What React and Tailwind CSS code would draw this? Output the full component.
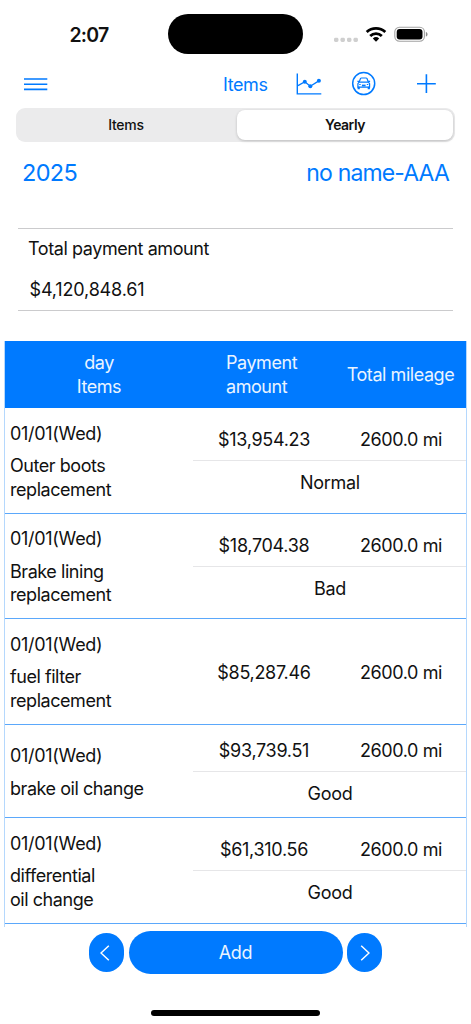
import React from "react";

const rows = [
    { date: "01/01(Wed)", item: ["Outer boots", "replacement"], amount: "$13,954.23", mileage: "2600.0 mi", status: "Normal", height: "h-[106px]" },
    { date: "01/01(Wed)", item: ["Brake lining", "replacement"], amount: "$18,704.38", mileage: "2600.0 mi", status: "Bad", height: "h-[105px]" },
    { date: "01/01(Wed)", item: ["fuel filter", "replacement"], amount: "$85,287.46", mileage: "2600.0 mi", height: "h-[106px]" },
    { date: "01/01(Wed)", item: ["brake oil change"], amount: "$93,739.51", mileage: "2600.0 mi", status: "Good", height: "h-[93px]" },
    { date: "01/01(Wed)", item: ["differential", "oil change"], amount: "$61,310.56", mileage: "2600.0 mi", status: "Good", height: "h-[106px]" },
];

function StatusBar() {
    return (
        <div className="flex h-[68px] items-start">
            <div className="w-[168px] pt-[23px] pl-[69.5px] text-[19.5px] leading-6 font-semibold tracking-[-0.8px]">2:07</div>
            <div className="mt-[14px] h-10 w-[135px] rounded-full bg-black" />
            {/* Signal, wifi and battery */}
            <svg className="mt-[22px] ml-[30px]" width="96" height="24" viewBox="0 0 96 24">
                <g fill="#cfcfcf">
                    <rect x="1" y="15.8" width="4.4" height="4.2" rx="1.4" />
                    <rect x="7.5" y="15.8" width="4.4" height="4.2" rx="1.4" />
                    <rect x="14" y="15.8" width="4.4" height="4.2" rx="1.4" />
                    <rect x="20.5" y="15.8" width="4.4" height="4.2" rx="1.4" />
                </g>
                <g fill="none" stroke="#000" strokeWidth="2.8">
                    <path d="M33.7 10.1a13.6 13.6 0 0 1 18.6 0" />
                    <path d="M37.2 14a8.4 8.4 0 0 1 11.6 0" />
                </g>
                <path d="M39.8 16.5a4.8 4.8 0 0 1 6.4 0L43 19.8z" />
                <rect x="61.8" y="5.2" width="29.6" height="14" rx="4.6" fill="none" stroke="#a3a3a3" strokeWidth="1.1" />
                <rect x="63.7" y="7" width="25.8" height="10.4" rx="3" />
                <path d="M92.9 10v4.6c2.2-.7 2.2-3.9 0-4.6z" fill="#8c8c8c" />
            </svg>
        </div>
    );
}

function NavBar() {
    return (
        <div className="flex h-[39.5px] items-start text-[#007aff]">
            <svg className="mt-[9px] ml-6" width="24" height="14" viewBox="0 0 24 14" stroke="currentColor" strokeWidth="1.6">
                <path d="M0 2h23.3M0 7.2h23.3M0 12.4h23.3" />
            </svg>
            <div className="mt-[5px] ml-[175px] w-[47px] text-[18px] leading-6 whitespace-nowrap tracking-[-0.4px]">Items</div>
            <svg className="mt-[4px] ml-[26px]" width="26" height="24" viewBox="0 0 26 24" fill="none" stroke="currentColor" strokeWidth="1.4">
                <path d="M1.3 1.5v20.4h24" />
                <path d="M2 13.6l6.8-3.8 5.5 4.4 8.9-5.6" strokeWidth="1.3" />
                <g fill="currentColor" stroke="none">
                    <circle cx="8.8" cy="9.8" r="2" />
                    <circle cx="14.3" cy="14.2" r="2" />
                    <circle cx="22.9" cy="8.8" r="2" />
                </g>
            </svg>
            <svg className="mt-[3px] ml-[29px]" width="26" height="26" viewBox="0 0 26 26" fill="none" stroke="currentColor">
                <circle cx="12.7" cy="12.6" r="11" strokeWidth="1.5" />
                <path d="M8.2 11l1.3-3.4q.3-.6 1-.6h4.5q.7 0 1 .6l1.3 3.4" strokeWidth="1.2" />
                <path d="M8.1 11.1h9.3l1.2 1.5v3.5H6.9v-3.5z" strokeWidth="1.2" />
                <path d="M7.7 15.7v2.5M17.8 15.7v2.5" strokeWidth="2.2" />
                <path d="M6.4 10.3h1.9M17.2 10.3h1.9" strokeWidth="1.2" />
                <path d="M10.9 14.5h3.7" strokeWidth="1.8" />
                <path d="M8.2 13.5h1.5M15.8 13.5h1.5" strokeWidth="1.2" />
            </svg>
            <svg className="mt-[6px] ml-10" width="20" height="20" viewBox="0 0 20 20" stroke="currentColor" strokeWidth="1.6">
                <path d="M0 9.7h18.8M9.4.3v18.8" />
            </svg>
        </div>
    );
}

function SegmentedControl() {
    return (
        <div className="mr-4 ml-4 flex h-[34px] rounded-[9px] bg-[#ebebec] p-[2px] text-center text-[14px] leading-[30px] tracking-[-0.3px]">
            <div className="w-[219px] pr-[3px] font-medium">Items</div>
            <div className="flex-1 rounded-[8px] bg-white font-semibold tracking-[-0.5px] shadow-[0_1px_3px_rgba(0,0,0,0.2)]">Yearly</div>
        </div>
    );
}

function Row({ row }) {
    return (
        <div className={`flex shrink-0 border-b border-[#5ba8fb] ${row.height}`}>
            <div className="flex w-[188px] flex-col justify-center gap-[9px] pt-[2px] pl-[5px]">
                <div className="tracking-[-0.3px]">{row.date}</div>
                <div>
                    {row.item.map((line) => (
                        <div key={line}>{line}</div>
                    ))}
                </div>
            </div>
            <div className="flex flex-1 flex-col justify-center pt-px text-center tracking-[-0.3px]">
                <div className={row.status ? "flex h-[42px] items-center border-b border-[#e6e6e8]" : "flex items-center"}>
                    <div className="w-[142px] pt-px">{row.amount}</div>
                    <div className="flex-1 pt-px pl-px tracking-[-0.4px]">{row.mileage}</div>
                </div>
                {row.status && <div className="h-[42px] pl-px leading-[43px]">{row.status}</div>}
            </div>
        </div>
    );
}

export default function App() {
    return (
        <div className="flex h-[1024px] w-[471px] flex-col overflow-hidden bg-white font-['Inter',sans-serif] text-[#111]">
            <StatusBar />
            <NavBar />
            <SegmentedControl />

            <div className="flex h-[86.5px] justify-between pt-[16px] pr-[22px] pl-[22px] text-[23.5px] leading-[30px] text-[#007aff]">
                <div className="tracking-[-0.7px]">2025</div>
                <div className="text-[23px] tracking-[-0.85px]">no name-AAA</div>
            </div>

            <div className="mr-[18px] ml-[18px] h-[83px] border-y border-[#cbcbcd] text-[18px] leading-6">
                <div className="pt-[8px] pl-[10px] tracking-[-0.42px]">Total payment amount</div>
                <div className="pt-[17px] pl-[11.5px] tracking-[-0.15px]">$4,120,848.61</div>
            </div>

            {/* Payment table, clipped above the bottom buttons */}
            <div className="mt-[30px] mr-[4px] ml-[4px] flex h-[586px] shrink-0 flex-col overflow-hidden border-x border-[#b5d8fd] text-[18px] leading-[23.5px] tracking-[-0.45px]">
                <div className="flex h-[67px] shrink-0 items-center bg-[#007aff] text-[#eaf4ff]">
                    <div className="w-[188px] text-center">
                        <div>day</div>
                        <div>Items</div>
                    </div>
                    <div className="w-[142px] pl-[33px]">
                        <div>Payment</div>
                        <div>amount</div>
                    </div>
                    <div className="flex-1 text-center whitespace-nowrap">Total mileage</div>
                </div>
                {rows.map((row, idx) => (
                    <Row key={idx} row={row} />
                ))}
            </div>

            <div className="mt-[4px] ml-[89px] flex h-[43px] items-center gap-[4.5px] text-white">
                <div className="flex h-[39.5px] w-[35px] items-center justify-center rounded-full bg-[#007aff] pr-[3px]">
                    <svg width="10" height="16" viewBox="0 0 10 16" fill="none" stroke="currentColor" strokeWidth="1.5">
                        <path d="M8.8.7L1 8l7.8 7.3" />
                    </svg>
                </div>
                <div className="h-[43px] w-[214px] rounded-full bg-[#007aff] text-center text-[18px] leading-[43px] tracking-[-0.3px] text-[#eaf4ff]">Add</div>
                <div className="flex h-[39.5px] w-[35px] items-center justify-center rounded-full bg-[#007aff] pl-px">
                    <svg width="10" height="16" viewBox="0 0 10 16" fill="none" stroke="currentColor" strokeWidth="1.5">
                        <path d="M1.2.7L9 8l-7.8 7.3" />
                    </svg>
                </div>
            </div>

            <div className="mt-[35.5px] ml-[151px] h-[6px] w-[169px] rounded-full bg-black" />
        </div>
    );
}
